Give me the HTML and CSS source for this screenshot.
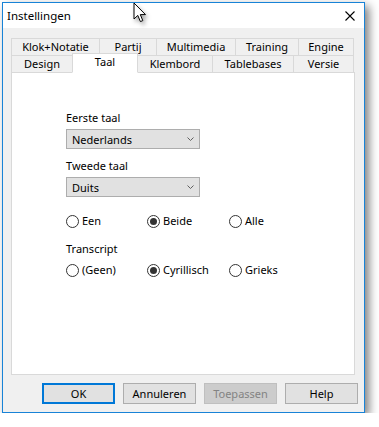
FILE: index.html
```html
<!DOCTYPE html>
<html lang="nl">
<head>
    <meta charset="UTF-8">
    <title>Instellingen</title>
    <link rel="stylesheet" href="styles.css">
</head>
<body>
    <div class="window">
        <div class="titlebar">
            <span class="title">Instellingen</span>
            <svg class="close" width="10" height="10" viewBox="0 0 10 10">
                <path d="M0.5 0.5 L9.5 9.5 M9.5 0.5 L0.5 9.5" stroke="#000" stroke-width="1.1" fill="none"/>
            </svg>
        </div>
        <div class="body">
            <div class="tabs">
                <div class="tab-row">
                    <div class="tab w89">Klok+Notatie</div>
                    <div class="tab w57">Partij</div>
                    <div class="tab w79">Multimedia</div>
                    <div class="tab w63">Training</div>
                    <div class="tab w55">Engine</div>
                </div>
                <div class="tab-row">
                    <div class="tab w62">Design</div>
                    <div class="tab w65 active">Taal</div>
                    <div class="tab w75">Klembord</div>
                    <div class="tab w81">Tablebases</div>
                    <div class="tab w60">Versie</div>
                </div>
            </div>
            <div class="panel">
                <div class="label">Eerste taal</div>
                <div class="combo">
                    <span>Nederlands</span>
                    <svg width="7" height="4" viewBox="0 0 7 4"><polyline points="0.5,0.5 3.5,3.5 6.5,0.5" fill="none" stroke="#606060" stroke-width="1"/></svg>
                </div>
                <div class="label gap">Tweede taal</div>
                <div class="combo">
                    <span>Duits</span>
                    <svg width="7" height="4" viewBox="0 0 7 4"><polyline points="0.5,0.5 3.5,3.5 6.5,0.5" fill="none" stroke="#606060" stroke-width="1"/></svg>
                </div>
                <div class="radios first">
                    <div class="radio"><span class="dot"></span>Een</div>
                    <div class="radio"><span class="dot checked"></span>Beide</div>
                    <div class="radio"><span class="dot"></span>Alle</div>
                </div>
                <div class="label transcript">Transcript</div>
                <div class="radios second">
                    <div class="radio"><span class="dot"></span>(Geen)</div>
                    <div class="radio"><span class="dot checked"></span>Cyrillisch</div>
                    <div class="radio"><span class="dot"></span>Grieks</div>
                </div>
            </div>
            <div class="buttons">
                <div class="button default">OK</div>
                <div class="button">Annuleren</div>
                <div class="button disabled">Toepassen</div>
                <div class="button">Help</div>
            </div>
        </div>
    </div>
    <svg class="cursor" width="14" height="22" viewBox="0 0 14 22">
        <path d="M1 1 L1 17 L4.8 13.4 L7.4 19.6 L9.8 18.6 L7.3 12.6 L12.5 12.6 Z" fill="#fff" stroke="#000" stroke-width="1" stroke-linejoin="miter"/>
    </svg>
</body>
</html>
```

FILE: styles.css
```css
body {
    margin: 0;
    background-color: #fff;
    font-family: "Noto Sans", Lato, sans-serif;
    font-size: 11px;
    color: #000;
}
.window {
    margin: 2px 0 0 2px;
    width: 361px;
    height: 409px;
    border: 1px solid #1883d7;
    background-color: #f0f0f0;
    box-shadow: 4px 4px 9px rgba(0, 0, 0, 0.5);
    display: flex;
    flex-direction: column;
}
.titlebar {
    height: 25px;
    background-color: #fff;
    display: flex;
    align-items: center;
    justify-content: space-between;
    padding: 0 9px 0 4px;
}
.title {
    font-size: 11.5px;
}
.close {
    display: block;
}
.body {
    flex: 1;
    display: flex;
    flex-direction: column;
    padding: 10px 6px 7px 8px;
}
.tabs {
    display: flex;
    flex-direction: column;
    height: 34px;
    position: relative;
    z-index: 1;
}
.tab-row {
    display: flex;
    height: 17px;
}
.tab {
    box-sizing: border-box;
    height: 18px;
    border: 1px solid #d9d9d9;
    border-left-width: 0;
    background-color: #f0f0f0;
    text-align: center;
    line-height: 16px;
}
.tab:first-child {
    border-left-width: 1px;
}
.tab.active {
    background-color: #fff;
    height: 20px;
    margin-top: -2px;
    border-bottom-color: #fff;
    border-left-width: 1px;
    margin-left: -1px;
    line-height: 15px;
}
.w89 { width: 89px; }
.w57 { width: 57px; }
.w79 { width: 79px; }
.w63 { width: 63px; }
.w55 { width: 55px; }
.w62 { width: 62px; }
.w65 { width: 66px; }
.w75 { width: 75px; }
.w81 { width: 81px; }
.w60 { width: 60px; }
.panel {
    box-sizing: border-box;
    width: 344px;
    height: 303px;
    border: 1px solid #d9d9d9;
    background-color: #fff;
    padding: 37px 0 0 54px;
}
.label {
    line-height: 16px;
}
.label.gap {
    margin-top: 9px;
}
.label.transcript {
    margin-top: 12px;
}
.combo {
    box-sizing: border-box;
    margin-top: 3px;
    width: 134px;
    height: 20px;
    border: 1px solid #adadad;
    background-color: #e1e1e1;
    display: flex;
    align-items: center;
    justify-content: space-between;
    padding: 0 5px 0 5px;
}
.combo svg {
    display: block;
}
.radios {
    display: grid;
    grid-template-columns: 81px 82px auto;
    line-height: 16px;
}
.radios.first {
    margin-top: 16px;
}
.radios.second {
    margin-top: 5px;
}
.radio {
    display: flex;
    align-items: center;
    gap: 3px;
}
.dot {
    box-sizing: border-box;
    width: 13px;
    height: 13px;
    border: 1px solid #333;
    border-radius: 50%;
    background-color: #fff;
    display: flex;
    align-items: center;
    justify-content: center;
}
.dot.checked::after {
    content: "";
    width: 7px;
    height: 7px;
    border-radius: 50%;
    background-color: #333;
}
.buttons {
    display: flex;
    justify-content: flex-end;
    gap: 8px;
    margin-top: 8px;
}
.button {
    box-sizing: border-box;
    width: 73px;
    height: 21px;
    border: 1px solid #adadad;
    background-color: #e1e1e1;
    text-align: center;
    line-height: 19px;
}
.button.default {
    border: 2px solid #0078d7;
    line-height: 17px;
}
.button.disabled {
    background-color: #cccccc;
    border-color: #bfbfbf;
    color: #838383;
}
.cursor {
    position: absolute;
    left: 133px;
    top: 2px;
    filter: drop-shadow(2px 3px 2px rgba(0, 0, 0, 0.35));
}
```
